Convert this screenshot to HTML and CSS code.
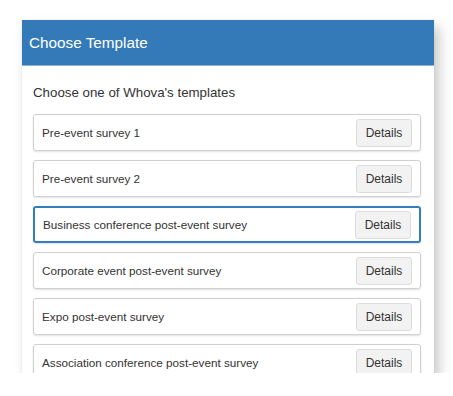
FILE: index.html
```html
<!DOCTYPE html>
<html lang="en">
<head>
    <meta charset="UTF-8">
    <meta name="viewport" content="width=device-width, initial-scale=1.0">
    <title>Choose Template</title>
    <link rel="stylesheet" href="styles.css">
</head>
<body>
    <div class="modal">
        <div class="modal-header">Choose Template</div>
        <div class="modal-body">
            <p class="intro">Choose one of Whova's templates</p>
            <div class="template-list">
                <div class="template">
                    <span class="template-name">Pre-event survey 1</span>
                    <button class="details">Details</button>
                </div>
                <div class="template">
                    <span class="template-name">Pre-event survey 2</span>
                    <button class="details">Details</button>
                </div>
                <div class="template selected">
                    <span class="template-name">Business conference post-event survey</span>
                    <button class="details">Details</button>
                </div>
                <div class="template">
                    <span class="template-name">Corporate event post-event survey</span>
                    <button class="details">Details</button>
                </div>
                <div class="template">
                    <span class="template-name">Expo post-event survey</span>
                    <button class="details">Details</button>
                </div>
                <div class="template">
                    <span class="template-name">Association conference post-event survey</span>
                    <button class="details">Details</button>
                </div>
            </div>
        </div>
    </div>
</body>
</html>
```

FILE: styles.css
```css
body {
    font-family: 'Liberation Sans', Arial, sans-serif;
    background-color: #ffffff;
    margin: 0;
    padding: 20px 19px 0 22px;
}
.modal {
    background-color: white;
    height: 353px;
    overflow: hidden;
    box-shadow: 5px 7px 12px rgba(0, 0, 0, 0.22), 0 0 1px rgba(0, 0, 0, 0.15);
}
.modal-header {
    background-color: #357ab8;
    color: white;
    font-size: 15.3px;
    height: 45px;
    display: flex;
    align-items: center;
    padding-left: 7px;
    border-bottom: 1px solid #8db3d8;
}
.modal-body {
    padding: 0 13px 0 11px;
}
.intro {
    margin: 0;
    padding: 19px 0 0 0;
    height: 29px;
    font-size: 13.3px;
    color: #333;
}
.template-list {
    display: flex;
    flex-direction: column;
    gap: 9px;
}
.template {
    display: flex;
    align-items: center;
    justify-content: space-between;
    height: 37px;
    box-sizing: border-box;
    border: 1px solid #d0d0d0;
    border-radius: 3px;
    box-shadow: 0 1px 2px rgba(0, 0, 0, 0.12);
    padding: 0 8px 0 8px;
    flex-shrink: 0;
}
.template.selected {
    border: 2px solid #357ebd;
    padding: 0 8px 0 8px;
}
.template-name {
    font-size: 11.7px;
    color: #333;
}
.details {
    font-family: inherit;
    font-size: 12px;
    color: #333;
    background-color: #f2f2f2;
    border: 1px solid #dcdcdc;
    border-radius: 3px;
    width: 56px;
    height: 28px;
    padding: 0;
}
```
